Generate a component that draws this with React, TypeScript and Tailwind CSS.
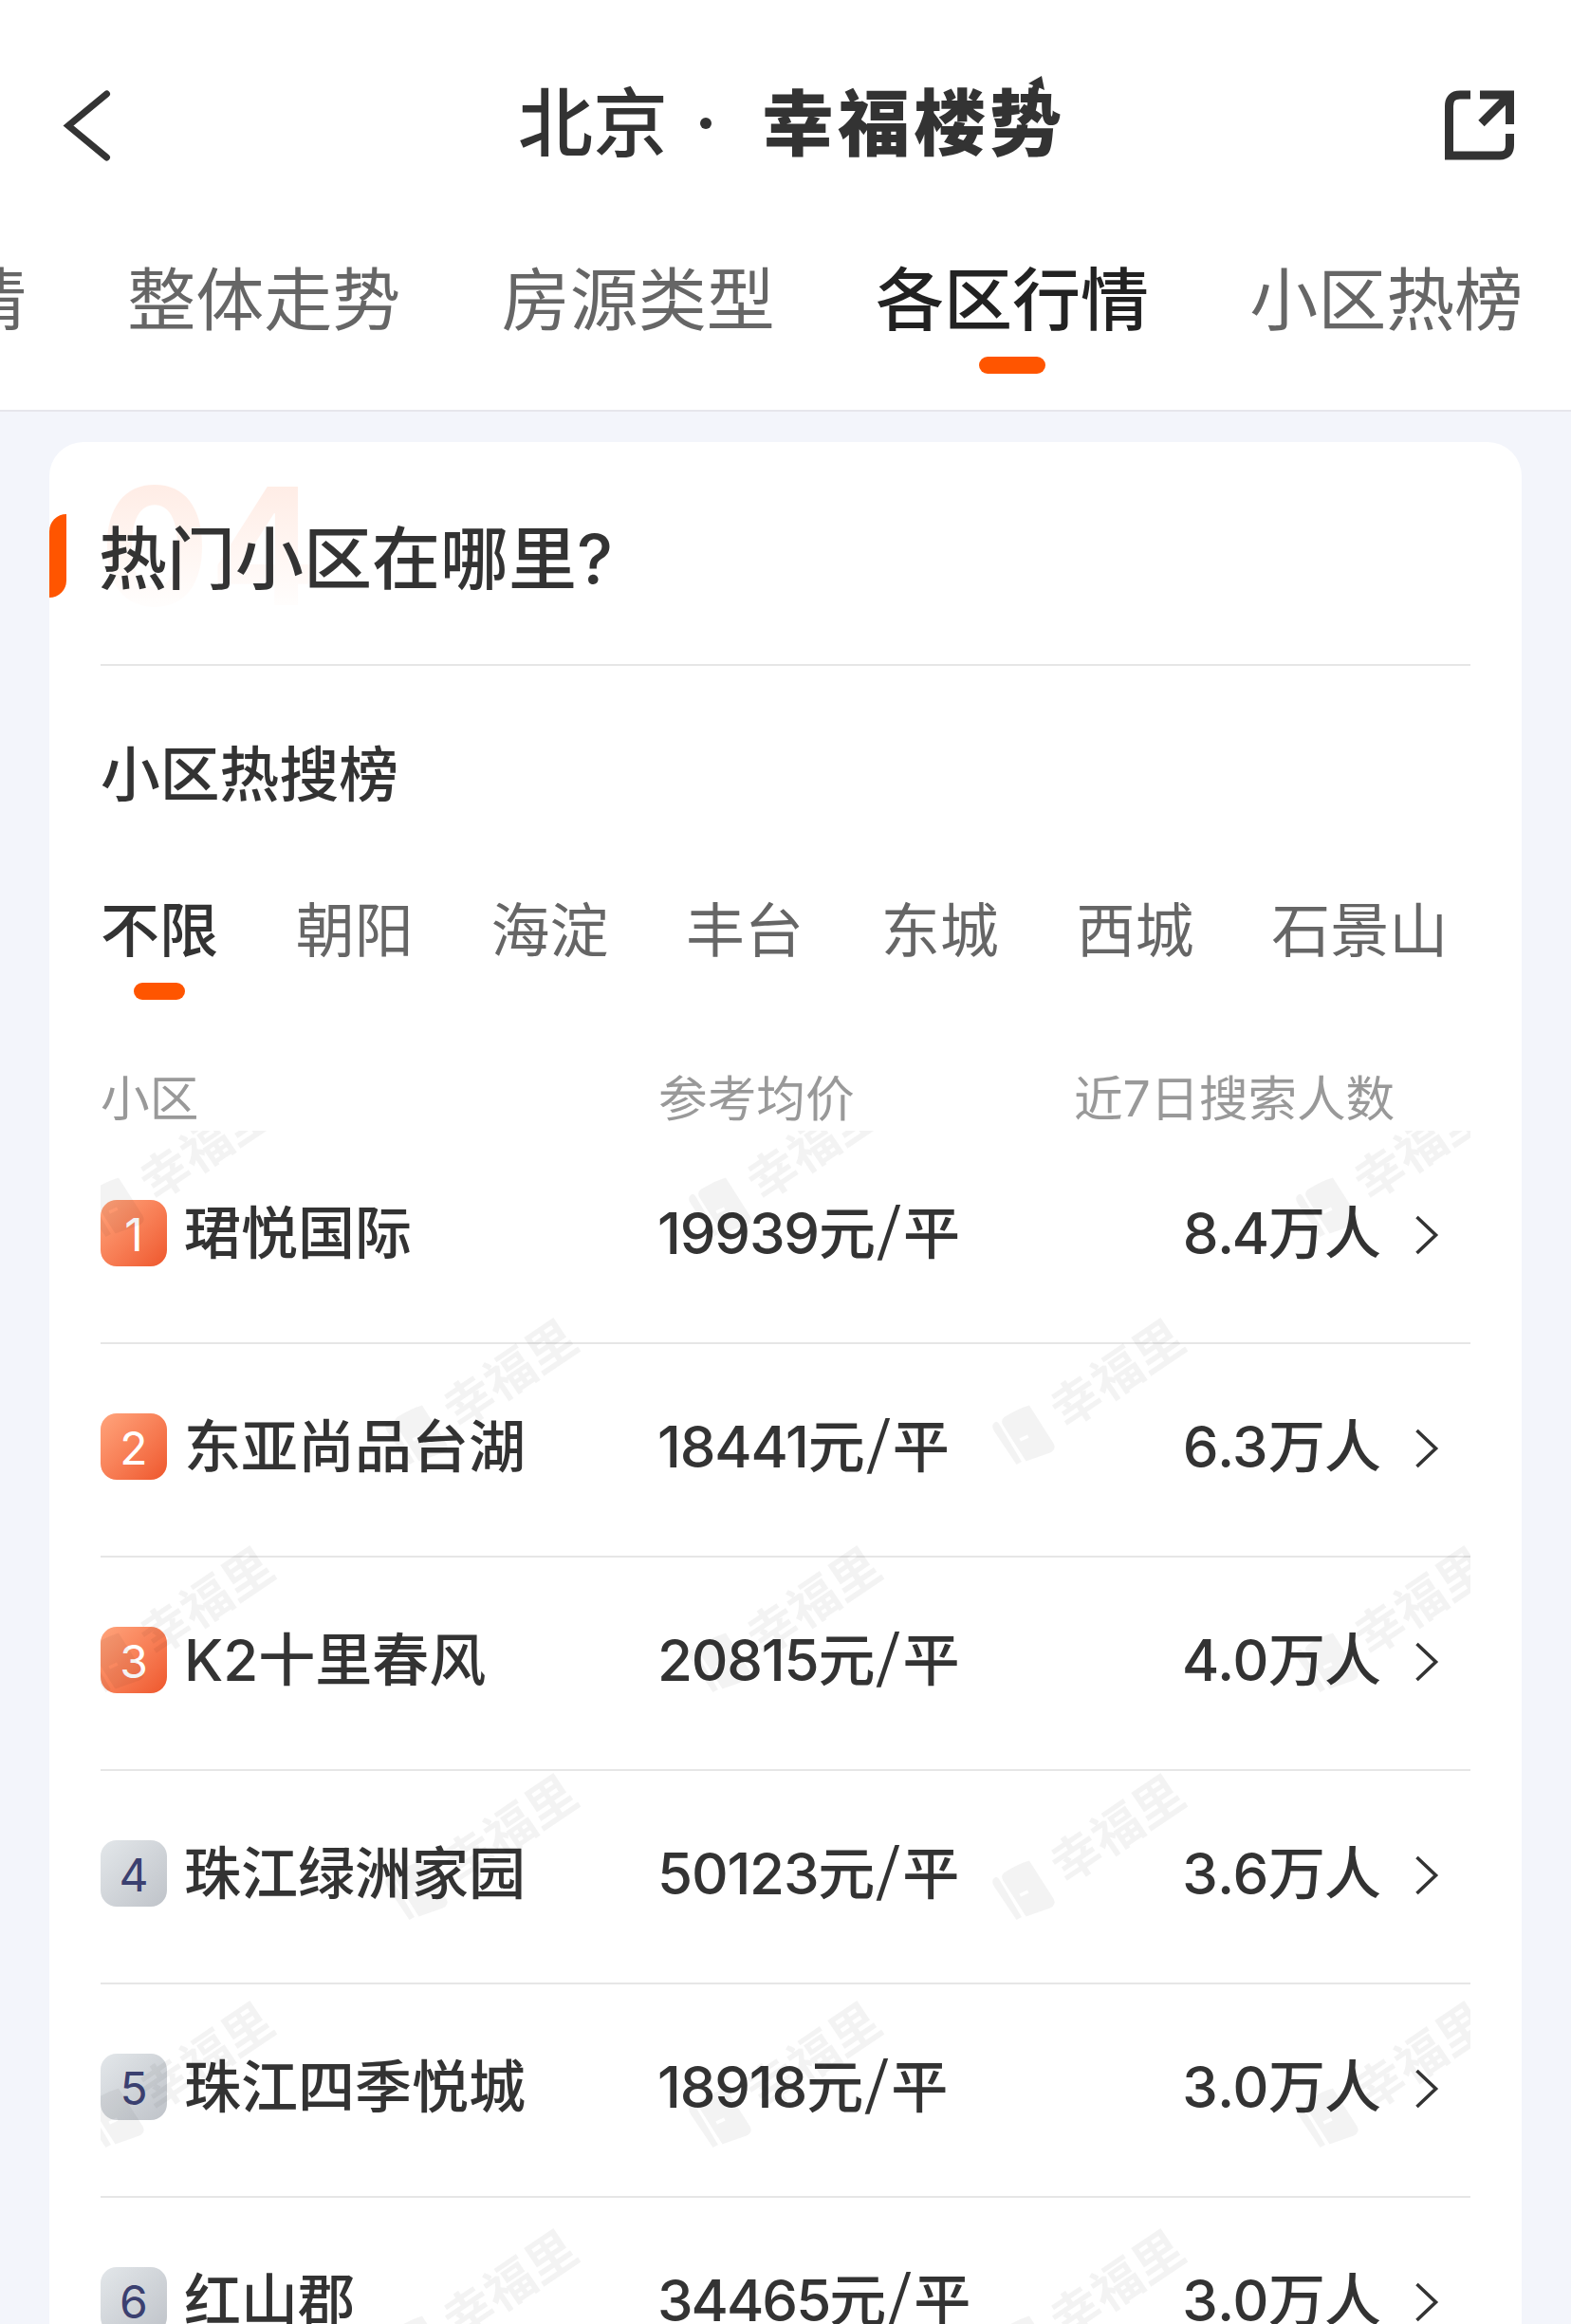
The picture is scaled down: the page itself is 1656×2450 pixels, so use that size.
const tabs = ["市场行情", "整体走势", "房源类型", "各区行情", "小区热榜"];
const districts = ["不限", "朝阳", "海淀", "丰台", "东城", "西城", "石景山"];
const rows = [
  { name: "珺悦国际", price: "19939", count: "8.4" },
  { name: "东亚尚品台湖", price: "18441", count: "6.3" },
  { name: "K2十里春风", price: "20815", count: "4.0" },
  { name: "珠江绿洲家园", price: "50123", count: "3.6" },
  { name: "珠江四季悦城", price: "18918", count: "3.0" },
  { name: "红山郡", price: "34465", count: "3.0" },
];

// Watermark tiles, relative to the list's top left corner.
const marks: [number, number][] = [];
for (let r = 0; r < 6; r++) {
  const start = r % 2 === 0 ? -20 : 300;
  for (let c = 0; c < 3; c++) {
    marks.push([start + c * 640, -43 + r * 240]);
  }
}

function Watermark() {
  return (
    <>
      <svg width="206" height="158" viewBox="0 0 206 158" className="absolute inset-0" fill="black">
        <path d="M2.500 110.500 Q5 108.500 7.500 112.500 L31 152 L25.500 155 L2 120 Q-2 113.500 2.500 110.500 Z" />
        <path
          fillRule="evenodd"
          d="M15 103.500 Q27 96 39 92.500 L64.500 132.500 Q68 139 61 142.500 L35.500 151.500 L11 113 Q8 107 15 103.500 Z M28.500 127.500 L37 123.500 L38.500 126.500 L30 130.500 Z"
        />
      </svg>
      <span className="absolute top-[34px] left-[54px] w-[156px] -rotate-[34deg] text-[52px] leading-[52px] font-bold whitespace-nowrap text-black">
        幸福里
      </span>
    </>
  );
}

export default function App() {
  return (
    <div className="h-[2450px] w-[1656px] overflow-hidden bg-[#f3f5fb] font-['Inter','Noto_Sans_CJK_SC',sans-serif] text-[#333]">
      <header className="h-[434px] border-b-2 border-[#e6e6ec] bg-white">
        <div className="flex h-[262px] items-center justify-between px-[60px] pt-[2px]">
          <svg width="74" height="84" viewBox="0 0 74 84" fill="none" stroke="#333" strokeWidth="7" strokeLinecap="round" strokeLinejoin="miter">
            <path d="M52.500 9 L12 42.500 L52.500 76" />
          </svg>
          <div className="mb-1 flex items-center pl-[13px] text-[79px] leading-[100px] font-medium">
            <span>北京</span>
            <span className="mr-[53px] ml-[34px] size-3 rounded-full bg-[#333]" />
            <span className="relative text-[76px] font-black tracking-[4px]">
              幸福楼势
              <svg className="absolute top-[-2px] right-[18px]" width="26" height="34" viewBox="0 0 26 34" fill="#333">
                <path d="M19 2 L22 17 L16.500 14.500 L10 32 L3 30 L10 12 L5 10 Z" />
              </svg>
            </span>
          </div>
          <svg width="74" height="74" viewBox="0 0 74 74" fill="none" stroke="#333" strokeWidth="9">
            <path d="M28 5 H17 Q5.500 5 5.500 17 V69 H59 Q69.500 69 69.500 58 V46" />
            <path d="M38 5 H69.500 V36 M69.500 5 L39.500 35" />
          </svg>
        </div>
        <nav className="-ml-[260px] flex w-[1916px] gap-[106.300px] pt-[2px] text-[72px] leading-[104px]">
          {tabs.map((t) => (
            <div key={t} className={t === "各区行情" ? "flex shrink-0 flex-col items-center font-medium text-[#222]" : "shrink-0 text-[#666]"}>
              <span>{t}</span>
              {t === "各区行情" && <span className="mt-[8px] h-[18px] w-[70px] rounded-full bg-[#ff5500]" />}
            </div>
          ))}
        </nav>
      </header>

      <main className="mx-[52px] mt-8 h-[2100px] rounded-[36px] bg-white">
        <div className="relative flex h-[234px] items-center">
          <span className="absolute top-[21px] left-[53px] bg-linear-to-b from-[#ffede6] from-15% to-[#fffdfc] to-85% bg-clip-text text-[172px] leading-[176px] font-bold text-transparent">
            04
          </span>
          <span className="relative mt-[6px] h-[88px] w-[18px] rounded-tl-[18px] rounded-br-[18px] bg-[#ff5500]" />
          <h1 className="relative mt-3 ml-[34px] text-[72px] leading-[104px] font-medium">热门小区在哪里?</h1>
        </div>
        <div className="mx-[54px] border-t-2 border-[#e6e6e6]">
          <h2 className="mt-[68px] text-[62.800px] leading-[92px] font-medium">小区热搜榜</h2>
          <div className="mt-[76px] flex gap-[81.700px] text-[62px] leading-[88px]">
            {districts.map((d, i) => (
              <div key={d} className={i === 0 ? "flex flex-col items-center font-medium" : "text-[#666]"}>
                <span>{d}</span>
                {i === 0 && <span className="mt-[10px] h-[18px] w-[54px] rounded-full bg-[#ff5500]" />}
              </div>
            ))}
          </div>
          <div className="mt-[68px] grid grid-cols-[588px_438px_1fr] text-[51.700px] leading-[72px] text-[#999]">
            <span>小区</span>
            <span>参考均价</span>
            <span className="tracking-[-0.200px]">近7日搜索人数</span>
          </div>
          <div className="relative -mt-[2px] h-[1350px] overflow-hidden">
            {rows.map((r, i) => (
              <div key={r.name} className="flex h-[225px] items-center border-b-2 border-[#e6e6e6] pb-[7px] text-[60px] leading-[88px] font-medium">
                <span
                  className={
                    i < 3
                      ? "flex size-[70px] items-center justify-center rounded-[17px] bg-linear-to-br from-[#ffa47c] to-[#ee562b] pt-[3px] text-[48px] font-normal text-white"
                      : "flex size-[70px] items-center justify-center rounded-[17px] bg-linear-to-br from-[#e3e7ea] to-[#bfc3c9] pt-[3px] text-[48px] font-normal text-[#3b4070]"
                  }
                >
                  {i + 1}
                </span>
                <span className="ml-[18px] w-[499px]">{r.name}</span>
                <span className={r.price.includes("1") ? "tracking-[-1.200px]" : "tracking-[-2px]"}>{r.price}</span>
                <span>元</span>
                <span className="mb-[17px] flex w-[29px] -skew-x-3 justify-center font-['Noto_Sans_CJK_SC',sans-serif]">/</span>
                <span>平</span>
                <span className="ml-auto tracking-[-1px] tabular-nums">{r.count}万人</span>
                <svg className="mt-[3px] mr-[33px] ml-[36px]" width="26" height="44" viewBox="0 0 26 44" fill="none" stroke="#333" strokeWidth="3.600">
                  <path d="M2.500 3 L22.500 22 L2.500 41" />
                </svg>
              </div>
            ))}
            <div className="pointer-events-none absolute inset-0 opacity-[0.045]">
              {marks.map(([x, y]) => (
                <div key={`${x}-${y}`} className="absolute h-[158px] w-[206px]" style={{ left: x, top: y }}>
                  <Watermark />
                </div>
              ))}
            </div>
          </div>
        </div>
      </main>
    </div>
  );
}
